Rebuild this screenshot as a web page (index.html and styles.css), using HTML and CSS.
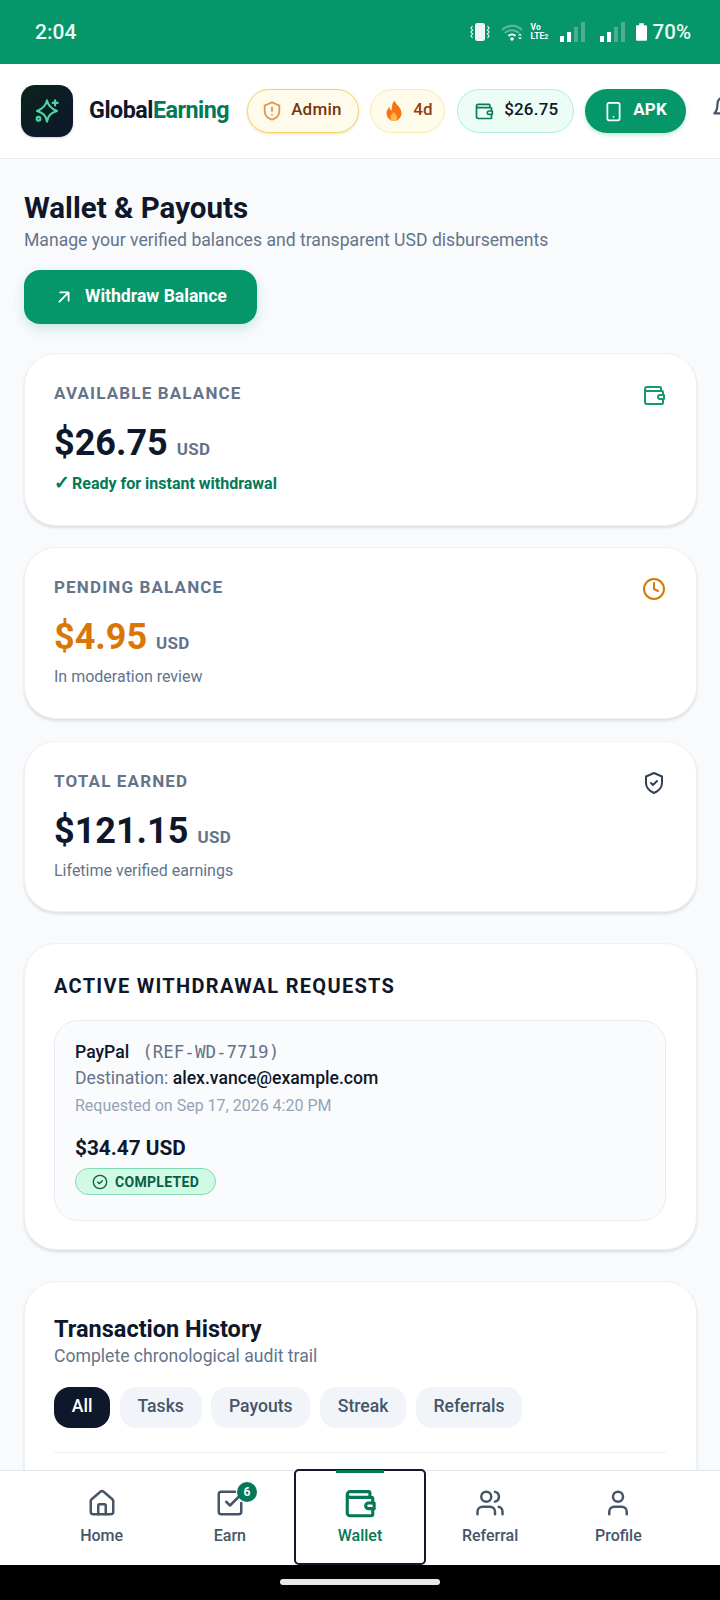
FILE: index.html
```html
<!DOCTYPE html>
<html lang="en">
<head>
<meta charset="utf-8">
<title>Wallet &amp; Payouts</title>
<link rel="stylesheet" href="styles.css">
</head>
<body>
<div class="screen">
  <div class="status">
    <span class="time">2:04</span>
    <div class="status-right">
      <svg class="s-vib" viewBox="0 0 20 20"><rect x="5" y="1" width="10" height="18" rx="2" fill="#eef7f3"/><path d="M2.500 4 1 6l1.500 2L1 10l1.500 2L1 14l1.500 2M17.500 4 19 6l-1.500 2 1.500 2-1.500 2 1.500 2-1.500 2" fill="none" stroke="#eef7f3" stroke-width="1.200"/></svg>
      <svg class="s-wifi" viewBox="0 0 22 18"><path d="M1 7a14 14 0 0 1 20 0M4 10a10 10 0 0 1 14 0" fill="none" stroke="#5fb89b" stroke-width="2"/><path d="M7.500 13a5 5 0 0 1 7 0" fill="none" stroke="#fff" stroke-width="2"/><circle cx="11" cy="16" r="1.800" fill="#fff"/><path d="m17 12.500 2-2 2 2zM17 14.500l2 2 2-2z" fill="#fff"/></svg>
      <span class="s-volte">Vo<br>LTE<i>2</i></span>
      <svg class="s-sig" viewBox="0 0 26 20"><rect x="0" y="14" width="4" height="6" fill="#fff"/><rect x="7" y="10" width="4" height="10" fill="#fff"/><rect x="14" y="5" width="4" height="15" fill="#4fae8f"/><rect x="21" y="0" width="4" height="20" fill="#4fae8f"/></svg>
      <svg class="s-sig s-sig2" viewBox="0 0 26 20"><rect x="0" y="14" width="4" height="6" fill="#fff"/><rect x="7" y="10" width="4" height="10" fill="#fff"/><rect x="14" y="5" width="4" height="15" fill="#4fae8f"/><rect x="21" y="0" width="4" height="20" fill="#4fae8f"/></svg>
      <svg class="s-bat" viewBox="0 0 12 19"><path d="M3.500 0h5v2H11a1 1 0 0 1 1 1v15a1 1 0 0 1-1 1H1a1 1 0 0 1-1-1V3a1 1 0 0 1 1-1h2.500z" fill="#fff"/></svg>
      <span class="pct">70%</span>
    </div>
  </div>

  <header class="topbar">
    <div class="logo">
      <svg viewBox="0 0 24 24" fill="none" stroke="#4fd6a5" stroke-width="1.700" stroke-linecap="round" stroke-linejoin="round"><path d="M12 3.500c.9 4.400 2.900 6.600 8 8.500-5.100 1.400-7.100 3.600-8 8.500-.9-4.900-2.900-7.100-8-8.500 5.100-1.900 7.100-4.100 8-8.500z"/><path d="M18.500 3.500v4M16.500 5.500h4"/><circle cx="5.200" cy="18.200" r="1.500"/></svg>
    </div>
    <span class="brand">Global<em>Earning</em></span>
    <span class="pill pill-admin">
      <svg class="pi" viewBox="0 0 24 24" fill="none" stroke="#e0964f" stroke-width="2" stroke-linecap="round" stroke-linejoin="round"><path d="M12 2.500 20 6v6c0 5-3.500 8-8 9.500C7.500 20 4 17 4 12V6z"/><path d="M12 8v4M12 16h.01"/></svg>
      Admin
    </span>
    <span class="pill pill-streak">
      <svg class="pi" viewBox="0 0 24 24"><path d="M12.500 1.500c1 4 7 6.500 7 13a7.500 7.500 0 0 1-15 0c0-3 1.500-5 3-6.500 0 2 .8 3 2 3.500.8-3.500 0-6.500 3-10z" fill="#f97316"/><path d="M12 22a3.800 3.800 0 0 1-3.500-4c0-2 2-3 3-5 1.500 2 3.500 3 3.500 5.200A3.500 3.500 0 0 1 12 22z" fill="#fdba4d"/></svg>
      4d
    </span>
    <span class="pill pill-bal">
      <svg class="pi" viewBox="0 0 24 24" fill="none" stroke="#0b7a5a" stroke-width="2" stroke-linecap="round" stroke-linejoin="round"><path d="M19 8V5a1 1 0 0 0-1-1H5a2 2 0 0 0 0 4h15a1 1 0 0 1 1 1v3M3 6v13a2 2 0 0 0 2 2h15a1 1 0 0 0 1-1v-3"/><path d="M22 12v4h-4a2 2 0 0 1 0-4z"/></svg>
      $26.75
    </span>
    <span class="pill pill-apk">
      <svg class="pi" viewBox="0 0 24 24" fill="none" stroke="#fff" stroke-width="2" stroke-linecap="round" stroke-linejoin="round"><rect x="5" y="2" width="14" height="20" rx="2"/><path d="M12 18h.01"/></svg>
      APK
    </span>
    <svg class="bell" viewBox="0 0 24 24" fill="none" stroke="#475569" stroke-width="2" stroke-linecap="round" stroke-linejoin="round"><path d="M6 8a6 6 0 0 1 12 0c0 7 3 9 3 9H3s3-2 3-9"/></svg>
  </header>

  <main class="page">
    <h1 class="title">Wallet &amp; Payouts</h1>
    <p class="subtitle">Manage your verified balances and transparent USD disbursements</p>
    <button class="withdraw">
      <svg viewBox="0 0 24 24" fill="none" stroke="#fff" stroke-width="2" stroke-linecap="round" stroke-linejoin="round"><path d="M7 17 17 7M8 7h9v9"/></svg>
      Withdraw Balance
    </button>

    <section class="card stat first">
      <div class="stat-main">
        <div class="label">AVAILABLE BALANCE</div>
        <div class="amount">$26.75<small>USD</small></div>
        <div class="note ok"><span class="check">✓</span>Ready for instant withdrawal</div>
      </div>
      <svg class="stat-ic" viewBox="0 0 24 24" fill="none" stroke="#159a6f" stroke-width="2" stroke-linecap="round" stroke-linejoin="round"><path d="M19 8V5a1 1 0 0 0-1-1H5a2 2 0 0 0 0 4h15a1 1 0 0 1 1 1v3M3 6v13a2 2 0 0 0 2 2h15a1 1 0 0 0 1-1v-3"/><path d="M22 12v4h-4a2 2 0 0 1 0-4z"/></svg>
    </section>

    <section class="card stat second">
      <div class="stat-main">
        <div class="label">PENDING BALANCE</div>
        <div class="amount orange">$4.95<small>USD</small></div>
        <div class="note">In moderation review</div>
      </div>
      <svg class="stat-ic" viewBox="0 0 24 24" fill="none" stroke="#d97706" stroke-width="2" stroke-linecap="round" stroke-linejoin="round"><circle cx="12" cy="12" r="10"/><path d="M12 6v6l4 2"/></svg>
    </section>

    <section class="card stat third">
      <div class="stat-main">
        <div class="label">TOTAL EARNED</div>
        <div class="amount">$121.15<small>USD</small></div>
        <div class="note">Lifetime verified earnings</div>
      </div>
      <svg class="stat-ic" viewBox="0 0 24 24" fill="none" stroke="#334155" stroke-width="2" stroke-linecap="round" stroke-linejoin="round"><path d="M12 2 20 5.500V12c0 5-3.500 8-8 10-4.500-2-8-5-8-10V5.500z"/><path d="m9 12 2 2 4-4"/></svg>
    </section>

    <section class="card requests">
      <h2 class="req-title">ACTIVE WITHDRAWAL REQUESTS</h2>
      <div class="req">
        <div class="req-line1"><b>PayPal</b><code>(REF-WD-7719)</code></div>
        <div class="req-line2">Destination: <b>alex.vance@example.com</b></div>
        <div class="req-line3">Requested on Sep 17, 2026 4:20 PM</div>
        <div class="req-amt">$34.47 USD</div>
        <span class="badge">
          <svg viewBox="0 0 24 24" fill="none" stroke="#065f46" stroke-width="2" stroke-linecap="round" stroke-linejoin="round"><circle cx="12" cy="12" r="10"/><path d="m8.500 12 2.500 2.500 4.500-4.500"/></svg>
          COMPLETED
        </span>
      </div>
    </section>

    <section class="card history">
      <h2 class="hist-title">Transaction History</h2>
      <p class="hist-sub">Complete chronological audit trail</p>
      <div class="chips">
        <span class="chip active">All</span>
        <span class="chip">Tasks</span>
        <span class="chip">Payouts</span>
        <span class="chip">Streak</span>
        <span class="chip">Referrals</span>
      </div>
      <div class="rule"></div>
    </section>
  </main>

  <nav class="nav">
    <div class="tab">
      <svg viewBox="0 0 24 24" fill="none" stroke="#475569" stroke-width="2" stroke-linecap="round" stroke-linejoin="round"><path d="M3 10.500a2 2 0 0 1 .7-1.500l7-6a2 2 0 0 1 2.600 0l7 6a2 2 0 0 1 .7 1.500V19a2 2 0 0 1-2 2H5a2 2 0 0 1-2-2z"/><path d="M9 21v-7a1 1 0 0 1 1-1h4a1 1 0 0 1 1 1v7"/></svg>
      <span>Home</span>
    </div>
    <div class="tab">
      <span class="tab-ic">
        <svg viewBox="0 0 24 24" fill="none" stroke="#475569" stroke-width="2" stroke-linecap="round" stroke-linejoin="round"><path d="M21 12v7a2 2 0 0 1-2 2H5a2 2 0 0 1-2-2V5a2 2 0 0 1 2-2h11"/><path d="m9 11 3 3 9-9"/></svg>
        <i class="count">6</i>
      </span>
      <span>Earn</span>
    </div>
    <div class="tab current">
      <svg viewBox="0 0 24 24" fill="none" stroke="#047857" stroke-width="2.200" stroke-linecap="round" stroke-linejoin="round"><path d="M19 8V5a1 1 0 0 0-1-1H5a2 2 0 0 0 0 4h15a1 1 0 0 1 1 1v3M3 6v13a2 2 0 0 0 2 2h15a1 1 0 0 0 1-1v-3"/><path d="M22 12v4h-4a2 2 0 0 1 0-4z"/></svg>
      <span>Wallet</span>
    </div>
    <div class="tab">
      <svg viewBox="0 0 24 24" fill="none" stroke="#475569" stroke-width="2" stroke-linecap="round" stroke-linejoin="round"><path d="M16 21v-2a4 4 0 0 0-4-4H6a4 4 0 0 0-4 4v2"/><circle cx="9" cy="7" r="4"/><path d="M22 21v-2a4 4 0 0 0-3-3.900M16 3.100a4 4 0 0 1 0 7.800"/></svg>
      <span>Referral</span>
    </div>
    <div class="tab">
      <svg viewBox="0 0 24 24" fill="none" stroke="#475569" stroke-width="2" stroke-linecap="round" stroke-linejoin="round"><path d="M19 21v-2a4 4 0 0 0-4-4H9a4 4 0 0 0-4 4v2"/><circle cx="12" cy="7" r="4"/></svg>
      <span>Profile</span>
    </div>
  </nav>
  <div class="gesture"><span></span></div>
</div>
</body>
</html>
```

FILE: styles.css
```css
* { box-sizing: border-box; }
html, body { margin: 0; padding: 0; }
body { font-family: Roboto, "Liberation Sans", sans-serif; background: #f8fafc; color: #0f172a; }
.screen { width: 720px; height: 1600px; overflow: hidden; position: relative; display: flex; flex-direction: column; }

.status { height: 64px; flex: none; background: #059669; color: #fff; display: flex; align-items: center; justify-content: space-between; padding: 0 29px 0 35px; }
.time { font-size: 21px; font-weight: 500; color: #eafaf4; }
.status-right { display: flex; align-items: center; }
.s-vib { width: 20px; height: 20px; margin-right: 11px; }
.s-wifi { width: 22px; height: 18px; margin-right: 8px; }
.s-volte { font-size: 8.500px; line-height: 9px; font-weight: 700; width: 20px; margin-right: 9px; }
.s-volte i { font-style: normal; font-size: 7px; }
.s-sig { width: 26px; height: 20px; margin-right: 14px; }
.s-sig2 { margin-right: 10px; }
.s-bat { width: 11px; height: 18px; margin-right: 6px; }
.pct { font-size: 20.500px; font-weight: 500; color: #eafaf4; }

.topbar { height: 95px; flex: none; background: #fff; border-bottom: 1px solid #e8edf3; display: flex; align-items: center; padding: 0 0 0 21px; white-space: nowrap; overflow: hidden; }
.logo { width: 52px; height: 52px; flex: none; border-radius: 14px; background: linear-gradient(135deg, #0a231f, #0f172a); display: flex; align-items: center; justify-content: center; margin-right: 16px; box-shadow: 0 1px 2px rgba(15,23,42,.2); }
.logo svg { width: 30px; height: 30px; }
.brand { font-size: 23.300px; font-weight: 700; letter-spacing: -.5px; color: #0f172a; margin: 0 18px 3px 0; }
.brand em { font-style: normal; color: #047857; }
.pill { flex: none; height: 44px; border-radius: 22px; display: inline-flex; align-items: center; font-size: 17px; font-weight: 500; letter-spacing: .2px; padding-bottom: 4px; }
.pi { width: 22px; height: 22px; flex: none; margin-top: 4px; }
.pill-admin { width: 112px; background: #fffbeb; border: 1.500px solid #f5d36c; color: #78350f; padding-left: 13px; gap: 8px; margin-right: 11px; box-shadow: 0 1px 3px rgba(180,130,20,.25); }
.pill-streak { width: 75px; background: #fffbeb; border: 1px solid #fde9b0; color: #92400e; padding-left: 11px; gap: 7px; margin-right: 12px; }
.pill-streak .pi { width: 24px; height: 24px; }
.pill-bal { width: 117px; background: #ecfdf5; border: 1px solid #b5ecd6; color: #0f172a; padding-left: 16px; gap: 10px; margin-right: 11px; }
.pill-bal .pi { width: 20px; height: 20px; }
.pill-apk { width: 101px; background: #059669; color: #fff; font-weight: 700; padding-left: 18px; gap: 9px; margin-right: 25px; box-shadow: 0 2px 4px rgba(6,150,104,.25); }
.pill-apk .pi { width: 21px; height: 21px; }
.bell { width: 26px; height: 26px; flex: none; margin-top: -6px; }

.page { flex: 1; padding: 31px 23px 0 24px; min-height: 0; overflow: hidden; }
.title { margin: 0; font-size: 29.500px; line-height: 36px; font-weight: 700; color: #0f172a; }
.subtitle { margin: 2px 0 0; font-size: 17.600px; line-height: 24px; color: #64748b; }
.withdraw { margin-top: 18px; width: 233px; height: 54px; border: 0; border-radius: 16px; background: #059669; color: #fff; font: 700 17.600px Roboto, sans-serif; display: flex; align-items: center; padding: 0 0 3px 29px; gap: 10px; box-shadow: 0 5px 12px rgba(6,150,104,.18); }
.withdraw svg { width: 22px; height: 22px; margin-top: 3px; }

.card { background: #fff; border: 1px solid #eef1f5; border-radius: 32px; box-shadow: 0 2px 3px rgba(15,23,42,.12); }
.stat { display: flex; justify-content: space-between; height: 172px; padding: 28px 30px 0 29px; margin-top: 22px; }
.first { margin-top: 29px; height: 173px; }
.second { margin-top: 21px; }
.third { height: 171px; }
.stat-ic { width: 24px; height: 24px; flex: none; margin-top: 1px; }
.label { font-size: 17px; line-height: 22px; font-weight: 700; letter-spacing: 1.150px; color: #64748b; }
.amount { font-size: 36px; line-height: 44px; font-weight: 700; margin-top: 17px; }
.amount small { font-size: 17px; font-weight: 700; letter-spacing: .3px; color: #64748b; margin-left: 9px; }
.orange { color: #d97706; }
.note { font-size: 16px; line-height: 20px; color: #64748b; margin-top: 2px; }
.ok { font-weight: 700; color: #047857; }
.check { display: inline-block; width: 18px; font-size: 19px; line-height: 20px; }

.requests { margin-top: 31px; height: 307px; padding: 29px 30px 0 29px; }
.req-title { margin: 0; font-size: 20px; line-height: 26px; font-weight: 700; letter-spacing: 1.300px; color: #0f172a; }
.req { margin-top: 21px; height: 201px; border: 1px solid #e8edf3; border-radius: 24px; background: #fafbfd; padding: 19px 20px 0; }
.req-line1 { font-size: 17.600px; line-height: 24px; }
.req-line1 b { font-weight: 500; }
.req-line1 code { font-family: "DejaVu Sans Mono", monospace; font-size: 17.500px; color: #64748b; margin-left: 13px; }
.req-line2 { font-size: 17.600px; line-height: 26px; color: #64748b; margin-top: 1px; }
.req-line2 b { font-weight: 500; color: #0f172a; }
.req-line3 { font-size: 16px; line-height: 26px; color: #94a3b8; margin-top: 2px; }
.req-amt { font-size: 20.800px; line-height: 26px; font-weight: 700; margin-top: 16px; }
.badge { display: inline-flex; align-items: center; gap: 7px; width: 141px; height: 27px; margin-top: 7px; padding-left: 16px; border: 1px solid #7fdcb7; border-radius: 14px; background: #d1fae5; color: #065f46; font-size: 14px; font-weight: 700; letter-spacing: .3px; }
.badge svg { width: 16px; height: 16px; }

.history { margin-top: 31px; height: 400px; padding: 33px 30px 0 29px; }
.hist-title { margin: 0; font-size: 23.500px; line-height: 28px; font-weight: 700; }
.hist-sub { margin: 1px 0 0; font-size: 17.600px; line-height: 24px; color: #64748b; }
.chips { display: flex; gap: 9.500px; margin-top: 19px; }
.chip { height: 41px; padding: 0 17.800px 4px; border-radius: 16px; background: #f1f5f9; color: #475569; font-size: 17.600px; font-weight: 500; display: flex; align-items: center; }
.active { background: #0f172a; color: #fff; }
.rule { height: 1px; background: #eef1f5; margin-top: 24px; }

.nav { position: absolute; left: 0; right: 0; bottom: 35px; height: 95px; background: rgba(255,255,255,.97); border-top: 1px solid #e2e8f0; display: flex; justify-content: center; padding: 0 37.500px; }
.tab { flex: 1; display: flex; flex-direction: column; align-items: center; color: #475569; font-size: 16px; font-weight: 500; padding-top: 17px; }
.tab > span:last-child { margin-top: 7px; line-height: 21px; }
.tab svg { width: 30px; height: 30px; display: block; }
.tab-ic { position: relative; display: block; }
.count { position: absolute; right: -12px; top: -6px; width: 20px; height: 20px; border-radius: 50%; background: #047857; color: #fff; font-style: normal; font-size: 12px; font-weight: 700; display: flex; align-items: center; justify-content: center; }
.current { color: #047857; position: relative; border: 2.500px solid #111827; border-radius: 5px; height: 96px; margin-top: -2px; flex: 0 0 132px; padding-top: 15px; }
.current svg { width: 34px; height: 34px; }
.current > span:last-child { margin-top: 5px; }
.current::before { content: ""; position: absolute; top: -1px; left: 40px; width: 48px; height: 3px; background: #047857; }
.gesture { position: absolute; left: 0; right: 0; bottom: 0; height: 35px; background: #000; display: flex; justify-content: center; padding-top: 14px; }
.gesture span { width: 160px; height: 6px; border-radius: 3px; background: #e8e8e8; }
```
